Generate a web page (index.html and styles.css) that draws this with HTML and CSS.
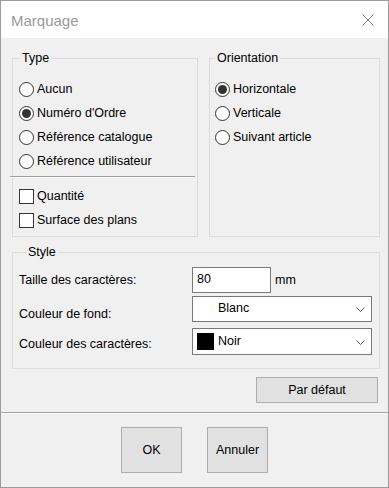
FILE: index.html
```html
<!DOCTYPE html>
<html lang="fr">
<head>
  <meta charset="UTF-8" />
  <title>Marquage</title>
  <link rel="stylesheet" href="styles.css">
</head>
<body>
  <div class="window">
    <div class="titlebar">
      <span class="title">Marquage</span>
      <svg class="close" width="12" height="12" viewBox="0 0 12 12">
        <path d="M0.5 0.5 L11.5 11.5 M11.5 0.5 L0.5 11.5" stroke="#777" stroke-width="1" fill="none" />
      </svg>
    </div>

    <div class="content">
      <div class="top-row">
        <fieldset class="group type-group">
          <legend>Type</legend>
          <div class="option"><span class="radio"></span>Aucun</div>
          <div class="option"><span class="radio checked"></span>Numéro d'Ordre</div>
          <div class="option"><span class="radio"></span>Référence catalogue</div>
          <div class="option"><span class="radio"></span>Référence utilisateur</div>
          <div class="etched"></div>
          <div class="option check-first"><span class="checkbox"></span>Quantité</div>
          <div class="option"><span class="checkbox"></span>Surface des plans</div>
        </fieldset>

        <fieldset class="group orient-group">
          <legend>Orientation</legend>
          <div class="option"><span class="radio checked"></span>Horizontale</div>
          <div class="option"><span class="radio"></span>Verticale</div>
          <div class="option"><span class="radio"></span>Suivant article</div>
        </fieldset>
      </div>

      <fieldset class="group style-group">
        <legend>Style</legend>
        <div class="field">
          <label>Taille des caractères:</label>
          <div class="textbox">80</div>
          <span class="unit">mm</span>
        </div>
        <div class="field field-2">
          <label class="low">Couleur de fond:</label>
          <div class="combo">
            <span class="combo-text">Blanc</span>
            <svg class="chevron" width="9" height="5" viewBox="0 0 9 5"><path d="M0.5 0.5 L4.5 4.5 L8.5 0.5" stroke="#555" fill="none" /></svg>
          </div>
        </div>
        <div class="field field-3">
          <label class="low-small">Couleur des caractères:</label>
          <div class="combo combo-tall">
            <span class="swatch"></span>
            <span class="combo-text swatched">Noir</span>
            <svg class="chevron" width="9" height="5" viewBox="0 0 9 5"><path d="M0.5 0.5 L4.5 4.5 L8.5 0.5" stroke="#555" fill="none" /></svg>
          </div>
        </div>
      </fieldset>

      <button class="btn default-btn">Par défaut</button>
    </div>

    <div class="divider"></div>

    <div class="footer">
      <button class="btn big-btn">OK</button>
      <button class="btn big-btn">Annuler</button>
    </div>
  </div>
</body>
</html>
```

FILE: styles.css
```css
body {
  margin: 0;
  background: #ffffff;
  font-family: "Liberation Sans", Arial, sans-serif;
  font-size: 12.5px;
  color: #000;
}

.window {
  width: 389px;
  height: 488px;
  box-sizing: border-box;
  border: 1px solid #9b9b9b;
  background: #f0f0f0;
  display: flex;
  flex-direction: column;
}

.titlebar {
  height: 37px;
  background: #ffffff;
  display: flex;
  align-items: center;
  justify-content: space-between;
  padding: 0 14px 0 10px;
  flex-shrink: 0;
}

.title {
  font-size: 15px;
  color: #9a9a9a;
  margin-top: 1px;
}

.close {
  display: block;
  margin-top: 1px;
}

.content {
  padding: 13px 8px 0 11px;
  display: flex;
  flex-direction: column;
}

.top-row {
  display: flex;
  gap: 11px;
}

.group {
  margin: 0;
  padding: 0;
  border: 1px solid #dcdcdc;
  box-sizing: border-box;
  min-width: 0;
}

.group legend {
  margin-left: 7px;
  padding: 0 2px;
  line-height: 14px;
}

.type-group {
  width: 186px;
  padding: 12px 0 4px 0;
}

.orient-group {
  width: 171px;
  padding: 12px 0 0 0;
}

.orient-group legend {
  margin-left: 5px;
}

.option {
  height: 24px;
  display: flex;
  align-items: center;
  padding-left: 6px;
  white-space: nowrap;
}

.orient-group .option {
  padding-left: 5px;
}

.radio {
  width: 15px;
  height: 15px;
  box-sizing: border-box;
  border: 1px solid #333;
  border-radius: 50%;
  background: #fff;
  margin-right: 3px;
  position: relative;
  flex-shrink: 0;
}

.radio.checked::after {
  content: "";
  position: absolute;
  inset: 2px;
  border-radius: 50%;
  background: #333;
}

.checkbox {
  width: 15px;
  height: 15px;
  box-sizing: border-box;
  border: 1px solid #333;
  background: #fff;
  margin-right: 3px;
  flex-shrink: 0;
}

.etched {
  margin: 3px 2px 0 -3px;
  border-top: 1px solid #a0a0a0;
  border-bottom: 1px solid #ffffff;
}

.check-first {
  margin-top: 6px;
}

.style-group {
  margin-top: 8px;
  padding: 8px 0 13px 6px;
}

.field {
  display: flex;
  align-items: center;
}

.field-2 {
  margin-top: 3px;
}

.field-3 {
  margin-top: 6px;
}

.field label {
  width: 173px;
  flex-shrink: 0;
}

.field label.low {
  padding-top: 10px;
}

.field label.low-small {
  padding-top: 4px;
}

.textbox {
  width: 79px;
  height: 26px;
  box-sizing: border-box;
  border: 1px solid #7a7a7a;
  background: #fff;
  padding-left: 4px;
  line-height: 22px;
}

.unit {
  margin-left: 4px;
}

.combo {
  width: 180px;
  height: 26px;
  box-sizing: border-box;
  border: 1px solid #7a7a7a;
  background: #fff;
  display: flex;
  align-items: center;
  padding: 0 6px 0 4px;
}

.combo-tall {
  height: 27px;
}

.combo-text {
  flex: 1;
  padding-left: 21px;
  margin-top: -2px;
}

.combo-text.swatched {
  padding-left: 4px;
}

.swatch {
  width: 17px;
  height: 17px;
  background: #000;
  margin-top: -1px;
}

.chevron {
  display: block;
  margin-top: 1px;
}

.btn {
  font-family: "Liberation Sans", Arial, sans-serif;
  font-size: 12.5px;
  color: #000;
  background: #e1e1e1;
  border: 1px solid #adadad;
  padding: 0;
  box-sizing: border-box;
}

.default-btn {
  align-self: flex-end;
  margin: 8px 2px 0 0;
  width: 122px;
  height: 26px;
}

.divider {
  margin-top: 9px;
  border-top: 1px solid #a0a0a0;
  border-bottom: 1px solid #ffffff;
}

.footer {
  flex: 1;
  display: flex;
  justify-content: center;
  align-items: flex-start;
  gap: 25px;
  padding-top: 13px;
}

.big-btn {
  width: 61px;
  height: 46px;
}
```
